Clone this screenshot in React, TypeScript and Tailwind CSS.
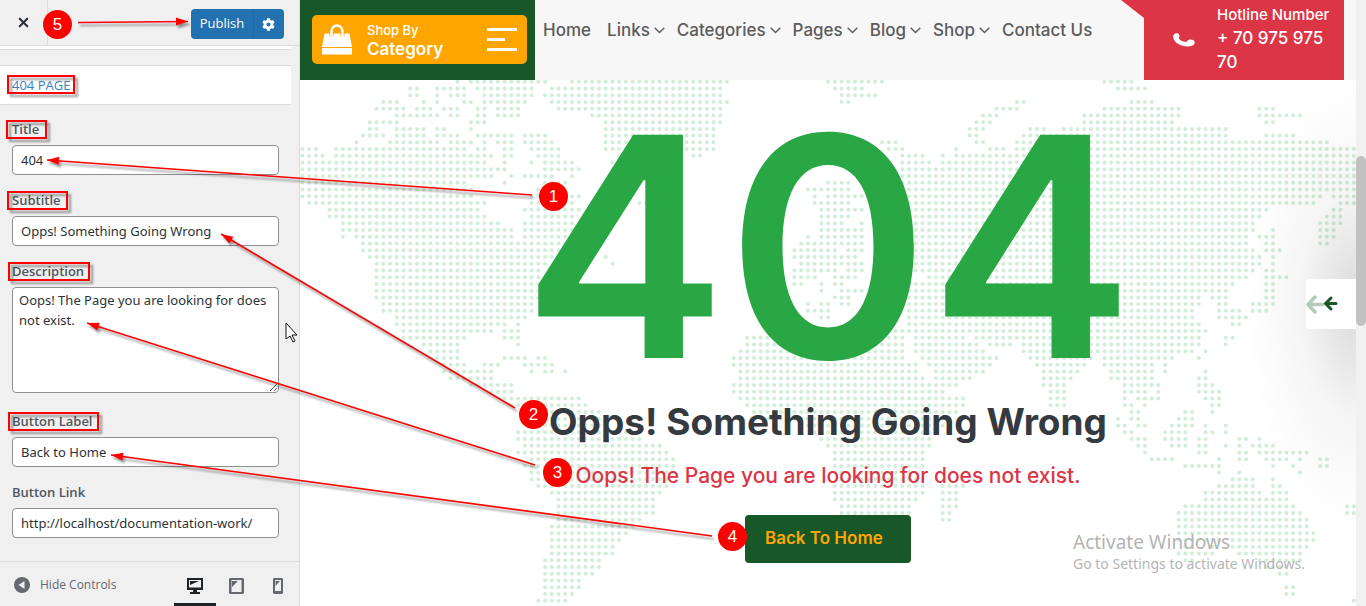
import React from 'react';
import { X } from 'lucide-react';
import { FaCog } from 'react-icons/fa';

// Dotted world map: one entry per row, each run is "first-last" column.
const MAP_ROWS = [
  '23 25-36 40-63 78-86 119-123',
  '16-17 20-24 26-34 37-62 79-83 121-125',
  '16-17 20 22-24 27-34 36-62 80-85',
  '12-14 18 20 24-25 27-33 37-63 80-81 106-107 123-126',
  '11-15 17-19 21-23 26-27 29-32 38-62 103-106 119-130 142-144',
  '14-20 22-23 26-27 29-32 43-62 101-103 116-130 142-148',
  '10-14 25-27 45-62 100-102 116-129 143-144',
  '10-11 14-18 20-21 25 45-61 99-101 108-110 113-137',
  '9-12 14-18 20-23 26-31 33-36 45-61 99-100 107-137 143-147',
  '8 13-20 22-25 27 29-31 33-37 45-61 86-88 100-101 106-152',
  '0-2 5-24 26-27 30-31 34-38 45-61 87-89 97 102-104 106-156',
  '0-3 5-28 30-31 35-38 47-56 58-59 89-92 95 97-156',
  '0-27 30 34 36-40 46-56 89-93 95-156',
  '0-30 36-41 46-50 89-156',
  '0-28 31 33-37 40 88-156',
  '0-24 30 36-39 78-81 88-156',
  '0-25 35-39 75-81 88-156',
  '0-25 34-41 76 78-83 88-151 153-156',
  '1-27 34-40 50-51 76-81 88-150 154-156',
  '4-26 33-41 77-83 88-143 153-154',
  '4-27 34-40 77-81 88-142 152-154',
  '6-29 33-40 77-80 83 88-141 151-154',
  '6-31 33-40 77-83 88-141 144 151-153',
  '6 8-31 33-39 75 77-83 89-140 142-144 151-153',
  '9-39 74-83 90-140 143-144 151-152',
  '9-38 73-79 81-83 90-141 143-145',
  '10-37 45 73-82 90-142 144',
  '11-36 46 74-83 90-142 144',
  '11-35 73-79 81-83 90-141 143-144',
  '11-35 73-76 79-82 93-140 143-146',
  '11-35 73-74 77 79-80 90-138 143-144',
  '11-35 77 80-83 90-137 143-144',
  '11-35 79-81 90-133 135-137 143-144',
  '12-34 75 77-78 80-81 90-133 136-137 141-144',
  '12-34 75-78 90-132 136-139 141-143',
  '14-33 77-78 90-132 136-140',
  '14-30 32 90-133 138-139',
  '15-28 30-32 87-134',
  '15-24 30-32 66-89 91-98 100-133 137-138',
  '18-23 32 66-89 91-100 102-105 107-133 137',
  '19-23 65-89 91-101 107-132 134',
  '20-23 30-33 35-36 64-89 92-103 108-117 119-129 133',
  '21-24 27-29 33-37 64-91 93-102 109-116 119-126 128',
  '21-28 34 36-37 39 65-91 94-101 110-115 120-126 128 134',
  '22-28 65-92 94-99 110-114 120-126 133-134',
  '25-31 64-97 110-113 122-127 133-135',
  '28-31 64-95 111-113 122-125 127 133-136',
  '30-41 65-98 111-113 122 124-127 134-136',
  '31-42 66-98 111-113 122-123 125 135-136',
  '33-44 67-97 123-124 131-132 135',
  '33-44 68-96 121 123-124 130-132',
  '34-45 74-95 121-122 124-125 129-132 134 137',
  '32-48 76-94 122-123 128-131 134-135 137',
  '32-50 77-93 123-125 128-131 133-134 139-140 142',
  '33-53 78-93 124-125 129-131 133-134 137 139 141-144',
  '32-54 79-92 125 133-134 139-140 142-149',
  '34-55 79-92 126-129 136 139-140 143-146 148 151-152',
  '33-55 79-92 131-136 144 147 151-152',
  '34-54 79-91 136 139 148',
  '34-54 80-92 138-141 144',
  '35-54 79-92 95-98 136-141 144-145',
  '37-53 79-92 95-97 134-142 144-146',
  '38-52 79-91 95-97 134-146',
  '38-52 80-90 95-97 131-147 155-156',
  '38-52 80-90 95-96 130-148 155-156',
  '38-50 95-96 130-149',
  '37-49 130-149',
  '37-48 130-150',
  '37-47 130-136 138-150',
  '37-46 131-132 135 138-149',
  '37-46 130-135 139-148',
  '36-44 131-132 142-148',
  '36-44 143-146',
  '36-43 145-146',
  '36-41',
  '36-41 146-147',
  '36-40 146-147',
  '35-39 156',
  '35-38',
];

const DOT_STEP = 6.74;

const mapPath = MAP_ROWS.map((row, y) =>
  row
    .split(' ')
    .map((run) => {
      const [first, last = first] = run.split('-').map(Number);
      return `M${first * DOT_STEP + 2.4} ${y * DOT_STEP + 1.7}h${(last - first) * DOT_STEP + 0.1}`;
    })
    .join('')
).join('');

const WorldMap: React.FC = () => (
  <svg className="absolute left-0 top-0" width="1056" height="526" viewBox="0 0 1056 526" aria-hidden="true">
    <path d={mapPath} fill="none" stroke="#d2edd8" strokeWidth="4" strokeLinecap="round" strokeDasharray={`0 ${DOT_STEP}`} />
  </svg>
);

interface FieldProps {
  id: string;
  label: string;
  value: string;
  multiline?: boolean;
}

const Field: React.FC<FieldProps> = ({ id, label, value, multiline }) => (
  <div className="flex flex-col">
    <label htmlFor={id} className="mb-1.5 text-[13px] leading-5 font-semibold text-[#50575e]">
      {label}
    </label>
    {multiline ? (
      <textarea
        id={id}
        defaultValue={value}
        className="h-[106px] resize-y rounded border border-[#8c8f94] bg-white px-1.5 py-0.5 font-['Noto_Sans',sans-serif] text-[13px] leading-5 text-[#2c3338]"
      />
    ) : (
      <input
        id={id}
        type="text"
        defaultValue={value}
        className="h-[30px] rounded border border-[#8c8f94] bg-white px-2 font-['Noto_Sans',sans-serif] text-[13px] text-[#2c3338]"
      />
    )}
  </div>
);

const Customizer: React.FC = () => (
  <aside className="flex w-[300px] shrink-0 flex-col border-r border-[#dcdcde] bg-[#f0f0f1] font-['Open_Sans','Noto_Sans',sans-serif]">
    <header className="flex h-[46px] shrink-0 items-center border-b border-[#dcdcde] pr-[15px]">
      <button aria-label="Close" className="flex h-full w-12 items-center justify-center border-r border-[#dcdcde] text-[#2c3338]">
        <X size={15} strokeWidth={3.4} />
      </button>
      <div className="mt-[3px] ml-auto flex h-[30px] rounded bg-[#2271b1] text-white">
        <button className="w-[63px] border-r border-[#1e69a6] text-[13px]">Publish</button>
        <button aria-label="Publish settings" className="w-[30px] pl-2">
          <FaCog size={13} />
        </button>
      </div>
    </header>
    <div className="mr-2 flex-1 overflow-hidden">
      <div className="h-1 border-b border-[#dcdcde] bg-white" />
      <h2 className="mt-[15px] border-y border-[#dcdcde] bg-white px-3 py-2.5 text-[13px] leading-[18px] text-[#3582c4]">404 PAGE</h2>
      <form className="flex flex-col gap-[15px] px-3 pt-[14px]">
        <Field id="title" label="Title" value="404" />
        <Field id="subtitle" label="Subtitle" value="Opps! Something Going Wrong" />
        <Field id="description" label="Description" value="Oops! The Page you are looking for does not exist." multiline />
        <div className="mt-[3px] flex flex-col gap-[15px]">
          <Field id="button-label" label="Button Label" value="Back to Home" />
          <Field id="button-link" label="Button Link" value="http://localhost/documentation-work/" />
        </div>
      </form>
    </div>
    <footer className="flex h-[45px] shrink-0 items-stretch border-t border-[#dcdcde] text-[#646970]">
      <button className="flex items-center gap-2.5 pt-0.5 pl-3.5 text-[12px]">
        <svg width="16" height="16" viewBox="0 0 16 16" aria-hidden="true">
          <circle cx="8" cy="8" r="8" fill="#646970" />
          <path d="M10.5 4v8L4.5 8z" fill="#f0f0f1" />
        </svg>
        Hide Controls
      </button>
      <div className="ml-auto flex">
        <button aria-label="Desktop preview" className="flex w-[42px] items-center justify-center border-b-[3px] border-[#1d2327] pt-[6px]">
          <svg width="16" height="16" viewBox="0 0 16 16" aria-hidden="true">
            <path fill="#1d2327" fillRule="evenodd" d="M0 0h16v12h-6v2h3v2H3v-2h3v-2H0zM2 2v7.500h12V2z" />
            <path fill="#1d2327" d="M3 3h9L3 7z" />
          </svg>
        </button>
        <button aria-label="Tablet preview" className="flex w-10 items-center justify-center pt-[3px]">
          <svg width="15" height="16" viewBox="0 0 15 16" aria-hidden="true">
            <path fill="#646970" fillRule="evenodd" d="M1 0h13l1 1v14l-1 1H1l-1-1V1zM2.500 2v12h10V2z" />
            <path fill="#646970" d="M3 3h6L3 9z" />
          </svg>
        </button>
        <button aria-label="Mobile preview" className="flex w-[43px] items-center justify-center pt-[3px]">
          <svg width="10" height="16" viewBox="0 0 10 16" aria-hidden="true">
            <path fill="#646970" fillRule="evenodd" d="M1 0h8l1 1v14l-1 1H1l-1-1V1zM2 2v11h6V2z" />
            <path fill="#646970" d="M2.500 3H7L2.500 8z" />
          </svg>
        </button>
      </div>
    </footer>
  </aside>
);

const NAV_ITEMS = [
  { name: 'Home', menu: false },
  { name: 'Links', menu: true },
  { name: 'Categories', menu: true },
  { name: 'Pages', menu: true },
  { name: 'Blog', menu: true },
  { name: 'Shop', menu: true },
  { name: 'Contact Us', menu: false },
];

const ShopHeader: React.FC = () => (
  <header className="flex h-20 shrink-0 bg-[#f7f7f7]">
    <div className="w-[235px] shrink-0 bg-[#175728] px-3 pt-[15px] pr-2">
      <button className="flex h-[49px] w-full items-center rounded-[5px] bg-[#ffa500] px-2.5 text-left text-white">
        <svg width="30" height="31" viewBox="0 0 30 31" aria-hidden="true">
          <path d="M2.500 9.500h25L30 23H0z" fill="#fff" />
          <path d="M0 24h30v6.500H0z" fill="#fff" />
          <path d="M9.500 12.500V8a5.500 6.500 0 0 1 11 0v4.500" fill="none" stroke="#ffa500" strokeWidth="4" />
          <path d="M9.500 12V7.500a5.500 6 0 0 1 11 0V12" fill="none" stroke="#fff" strokeWidth="2.500" strokeLinecap="round" />
        </svg>
        <span className="ml-[15px] flex flex-col">
          <span className="text-[13px] leading-[18px] font-medium">Shop By</span>
          <span className="text-[17px] leading-5 font-semibold">Category</span>
        </span>
        <svg className="ml-auto" width="30" height="23" viewBox="0 0 30 23" aria-hidden="true">
          <path d="M0 0h30v3H0zM0 10h18v3H0zM0 20h30v3H0z" fill="#fff" />
        </svg>
      </button>
    </div>
    <nav className="flex items-start gap-3 pt-[18px] pl-2 text-[17px] leading-6 font-medium text-[#5c5c5c]">
      {NAV_ITEMS.map((item) => (
        <a key={item.name} href="#" className="flex items-center gap-1 whitespace-nowrap first:mr-1">
          {item.name}
          {item.menu && (
            <svg width="11" height="7" viewBox="0 0 11 7" fill="none" stroke="currentColor" strokeWidth="1.4" aria-hidden="true">
              <path d="M.7.8l4.800 4.800L10.300.8" />
            </svg>
          )}
        </a>
      ))}
    </nav>
    <div className="relative mr-3 ml-auto flex w-[200px] shrink-0 bg-[#dc3545] pr-3 pl-[29px] text-white">
      <svg className="absolute top-0 -left-[23px]" width="23" height="18" viewBox="0 0 23 18" aria-hidden="true">
        <path d="M0 0h23v18z" fill="#dc3545" />
      </svg>
      <svg className="mt-[33px] shrink-0" width="22" height="14" viewBox="0 0 22 14" aria-hidden="true">
        <path
          d="M1 1.500C2.500-.3 5.500.2 6.300 2c.6 1.400-.3 2.200-.6 3C6.700 7.700 10.500 9.200 14 8.700c.5-1.300 1.300-2 2.700-2.200 2.500-.4 5 .7 5 2.700 0 1.800-1 3-2.500 3.500C11.500 15 1.700 11.500.2 4.500-.1 3.300.2 2.300 1 1.500z"
          fill="#fff"
        />
      </svg>
      <div className="ml-[22px] pt-1">
        <p className="text-[15px] leading-[22px] font-medium whitespace-nowrap">Hotline Number</p>
        <p className="text-[17px] leading-6 font-medium">+ 70 975 975 70</p>
      </div>
    </div>
  </header>
);

const Preview: React.FC = () => (
  <main className="relative flex min-w-0 flex-1 flex-col bg-white font-['Inter','Open_Sans',sans-serif]">
    <ShopHeader />
    <section className="relative flex flex-1 flex-col items-center">
      <WorldMap />
      <div className="absolute top-0 right-0 h-[450px] w-[110px] bg-[radial-gradient(ellipse_110px_225px_at_100%_50%,rgba(0,0,0,0.15),rgba(0,0,0,0.04)_50%,transparent)]" />
      <h1 className="relative mt-[47px] text-[307px] leading-[240px] font-semibold text-[#2aa745]">404</h1>
      <h2 className="relative mt-[31px] text-[37px] leading-[48px] font-bold text-[#343a40]">Opps! Something Going Wrong</h2>
      <p className="relative mt-[15px] text-[21px] leading-[30px] font-medium text-[#dc3545]">Oops! The Page you are looking for does not exist.</p>
      <a href="#" className="relative mt-6 h-12 w-[166px] rounded bg-[#175728] pl-5 text-[17px] leading-[46px] font-semibold text-[#ffa500]">
        Back To Home
      </a>
      <button aria-label="Open panel" className="absolute top-[199px] right-0 flex h-[50px] w-[50px] items-center rounded-l bg-white">
        <svg width="32" height="20" viewBox="0 0 32 20" fill="none" strokeLinecap="round" strokeLinejoin="round" aria-hidden="true">
          <path d="M17 10.500H2.500M9 3L2 10.500 9 18" stroke="#b5cabb" strokeWidth="3.500" />
          <path d="M30 9.500H20M25 4l-5.500 5.500L25 15" stroke="#175728" strokeWidth="3" />
        </svg>
      </button>
      <div className="absolute right-[46px] bottom-8 w-[237px] font-['Noto_Sans',sans-serif] whitespace-nowrap text-[#b4b4b4]">
        <p className="text-[19px] leading-6">Activate Windows</p>
        <p className="text-sm leading-5">Go to Settings to activate Windows.</p>
      </div>
    </section>
  </main>
);

const ARROWS = [
  { from: [78, 22.5], to: [188, 21.5] },
  { from: [532, 195], to: [47, 160] },
  { from: [515, 408], to: [221, 234] },
  { from: [535, 465], to: [87, 323] },
  { from: [712, 536], to: [111, 455] },
];

const FRAMES = [
  { x: 8, y: 76, width: 66, height: 17 },
  { x: 7, y: 121, width: 39, height: 17 },
  { x: 8, y: 192, width: 59, height: 17 },
  { x: 9, y: 263, width: 80, height: 17 },
  { x: 9, y: 413, width: 89, height: 17 },
];

const Annotations: React.FC = () => (
  <div className="pointer-events-none absolute inset-0 font-['Liberation_Sans',sans-serif] text-[17px] leading-[29px] text-white">
    <svg className="absolute inset-0" width="1366" height="606" viewBox="0 0 1366 606" aria-hidden="true">
      <g className="drop-shadow-[3px_3px_1px_rgba(0,0,0,0.4)]" stroke="#f00" fill="none">
        {FRAMES.map((frame) => (
          <rect key={frame.y} {...frame} strokeWidth="2" />
        ))}
      </g>
      <g className="drop-shadow-[2px_3px_1px_rgba(0,0,0,0.4)]">
        {ARROWS.map(({ from, to }) => {
          const angle = (Math.atan2(to[1] - from[1], to[0] - from[0]) * 180) / Math.PI;
          return (
            <g key={to[1]}>
              <line x1={from[0]} y1={from[1]} x2={to[0]} y2={to[1]} stroke="#f00" strokeWidth="1.5" />
              <path d="M0 0l-12-4v8z" fill="#f00" transform={`translate(${to[0]} ${to[1]}) rotate(${angle})`} />
            </g>
          );
        })}
      </g>
      <path d="M286 323v16l4-3 3 6 2-1-3-6h5z" fill="#fff" stroke="#111" strokeWidth="1" />
    </svg>
    <span className="absolute top-[10px] left-[43px] size-[29px] rounded-full bg-[#f00] text-center">5</span>
    <span className="absolute top-[182px] left-[539px] size-[29px] rounded-full bg-[#f00] text-center">1</span>
    <span className="absolute top-[400px] left-[519px] size-[29px] rounded-full bg-[#f00] text-center">2</span>
    <span className="absolute top-[458px] left-[543px] size-[29px] rounded-full bg-[#f00] text-center">3</span>
    <span className="absolute top-[522px] left-[718px] size-[29px] rounded-full bg-[#f00] text-center">4</span>
  </div>
);

const App: React.FC = () => (
  <div className="relative flex h-screen overflow-hidden">
    <Customizer />
    <Preview />
    <div className="w-2.5 shrink-0 bg-[#f1f1f1] pt-[156px]">
      <div className="h-[170px] rounded-full bg-[#c1c1c1]" />
    </div>
    <Annotations />
  </div>
);

export default App;
